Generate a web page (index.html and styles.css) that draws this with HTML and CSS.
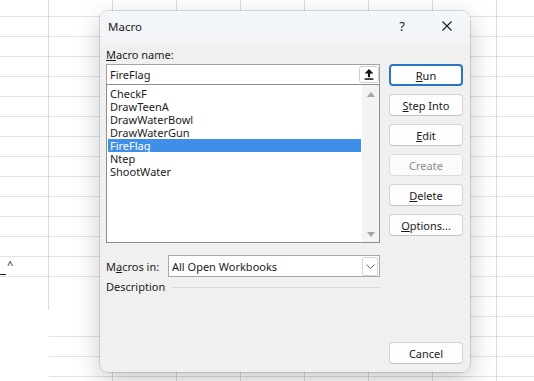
FILE: index.html
```html
<!DOCTYPE html>
<html lang="en">
<head>
    <meta charset="UTF-8">
    <meta name="viewport" content="width=device-width, initial-scale=1.0">
    <title>Macro</title>
    <link rel="stylesheet" href="styles.css">
</head>
<body>
    <div class="sheet">
        <div class="blank blank-a"></div>
        <div class="blank blank-b"></div>
        <div class="blank blank-c"></div>
        <div class="cell-note"><span class="uline"></span><span class="caret">^</span></div>

        <div class="dialog">
            <div class="titlebar">
                <span class="title">Macro</span>
                <span class="help">?</span>
                <span class="close">
                    <svg width="10" height="10" viewBox="0 0 10 10"><path d="M0.5 0.5 L9.5 9.5 M9.5 0.5 L0.5 9.5" stroke="#1b1b1b" stroke-width="1.1" fill="none"/></svg>
                </span>
            </div>

            <div class="content">
                <div class="main">
                    <label class="field-label"><u>M</u>acro name:</label>
                    <div class="name-input">
                        <span>FireFlag</span>
                        <button class="ref-btn">
                            <svg width="10" height="11" viewBox="0 0 10 11"><path d="M5 0 L9.5 4.6 H6.1 V8.3 H3.9 V4.6 H0.5 Z" fill="#111"/><rect x="0.6" y="9.3" width="8.8" height="1.5" fill="#111"/></svg>
                        </button>
                    </div>
                    <div class="listbox">
                        <ul class="items">
                            <li>CheckF</li>
                            <li>DrawTeenA</li>
                            <li>DrawWaterBowl</li>
                            <li>DrawWaterGun</li>
                            <li class="selected">FireFlag</li>
                            <li>Ntep</li>
                            <li>ShootWater</li>
                        </ul>
                        <div class="scrollbar">
                            <svg width="8" height="5" viewBox="0 0 8 5"><path d="M4 0 L8 5 H0 Z" fill="#a5a5a5"/></svg>
                            <svg width="8" height="5" viewBox="0 0 8 5"><path d="M0 0 H8 L4 5 Z" fill="#a5a5a5"/></svg>
                        </div>
                    </div>
                    <div class="macros-in">
                        <label class="row-label">M<u>a</u>cros in:</label>
                        <div class="select">
                            <span>All Open Workbooks</span>
                            <span class="drop">
                                <svg width="9" height="5" viewBox="0 0 9 5"><path d="M0.5 0.5 L4.5 4.5 L8.5 0.5" stroke="#666" stroke-width="1" fill="none"/></svg>
                            </span>
                        </div>
                    </div>
                    <div class="desc">
                        <span>Description</span>
                        <span class="rule"></span>
                    </div>
                </div>

                <div class="actions">
                    <button class="default"><u>R</u>un</button>
                    <button><u>S</u>tep Into</button>
                    <button><u>E</u>dit</button>
                    <button class="disabled">Create</button>
                    <button><u>D</u>elete</button>
                    <button><u>O</u>ptions...</button>
                    <button class="cancel">Cancel</button>
                </div>
            </div>
        </div>
    </div>
</body>
</html>
```

FILE: styles.css
```css
* {
    box-sizing: border-box;
}

body {
    margin: 0;
    width: 534px;
    height: 381px;
    overflow: hidden;
    font-family: "Noto Sans", sans-serif;
    font-size: 11px;
    color: #1b1b1b;
    background-color: #fff;
    background-image:
        linear-gradient(to right, #dadada 1px, transparent 1px),
        linear-gradient(to bottom, #e2e2e2 1px, transparent 1px);
    background-size: 64px 20px;
    background-position: 48px 0, 0 16px;
}

.sheet {
    position: relative;
    width: 534px;
    height: 381px;
}

/* empty cells at the lower left */
.blank {
    position: absolute;
    background: #fff;
}

.blank-a {
    left: 0;
    top: 282px;
    width: 48px;
    height: 28px;
}

.blank-b {
    left: 0;
    top: 310px;
    width: 49px;
    height: 71px;
}

.blank-c {
    left: 49px;
    top: 282px;
    width: 51px;
    height: 46px;
}

.cell-note {
    position: absolute;
    left: 0;
    top: 259px;
    display: flex;
    align-items: flex-start;
    height: 16px;
}

.uline {
    width: 6px;
    height: 1px;
    margin-top: 15px;
    background: #222;
}

.caret {
    margin-left: 1px;
    font-size: 11px;
    line-height: 11px;
}

/* dialog */
.dialog {
    position: absolute;
    left: 100px;
    top: 11px;
    width: 370px;
    height: 361px;
    display: flex;
    flex-direction: column;
    background: #f0f0f0;
    border-radius: 8px;
    box-shadow: 0 0 0 1px rgba(0, 0, 0, 0.12), 0 8px 26px rgba(0, 0, 0, 0.22);
}

.titlebar {
    height: 34px;
    padding: 0 0 4px 8px;
    display: flex;
    align-items: center;
    border-radius: 8px 8px 0 0;
    background: linear-gradient(to bottom, #f4f7fa, #f1f3f5);
}

.title {
    font-size: 11.5px;
}

.help {
    margin-left: auto;
    width: 22px;
    text-align: center;
    font-size: 13px;
}

.close {
    width: 46px;
    margin-left: 11px;
    display: flex;
    justify-content: center;
}

.content {
    flex: 1;
    display: flex;
    gap: 9px;
    padding: 0 7px 8px 6px;
}

.main {
    width: 274px;
    display: flex;
    flex-direction: column;
}

.field-label {
    height: 19px;
    line-height: 19px;
}

.name-input {
    height: 20px;
    padding-left: 3px;
    display: flex;
    align-items: center;
    justify-content: space-between;
    background: #fff;
    border: 1px solid #a3a3a3;
    border-bottom: none;
}

.ref-btn {
    width: 20px;
    height: 17px;
    padding: 0;
    display: flex;
    align-items: center;
    justify-content: center;
    background: #fff;
    border: 1px solid #cfcfcf;
    border-radius: 3px;
}

.listbox {
    height: 159px;
    display: flex;
    background: #fff;
    border: 1px solid #8e8e8e;
}

.items {
    flex: 1;
    margin: 0;
    padding: 2px 1px 0 1px;
    list-style: none;
}

.items li {
    height: 13px;
    line-height: 13px;
    padding-left: 2px;
}

.items li.selected {
    background: #3f8fe8;
    color: #fff;
}

.scrollbar {
    width: 17px;
    padding: 7px 0 5px;
    display: flex;
    flex-direction: column;
    align-items: center;
    justify-content: space-between;
    background: #f3f3f3;
}

.macros-in {
    margin-top: 12px;
    height: 22px;
    display: flex;
    align-items: center;
}

.row-label {
    width: 62px;
}

.select {
    flex: 1;
    height: 22px;
    padding-left: 3px;
    display: flex;
    align-items: center;
    justify-content: space-between;
    background: #fff;
    border: 1px solid #a8a8a8;
}

.drop {
    width: 16px;
    height: 19px;
    margin-right: 1px;
    display: flex;
    align-items: center;
    justify-content: center;
    border: 1px solid #d4d4d4;
    border-radius: 2px;
}

.desc {
    margin-top: 2px;
    height: 16px;
    line-height: 16px;
    display: flex;
    align-items: center;
}

.rule {
    flex: 1;
    margin-left: 6px;
    border-top: 1px solid #dadada;
}

.actions {
    width: 74px;
    padding-top: 19px;
    display: flex;
    flex-direction: column;
    gap: 8px;
}

.actions button {
    height: 22px;
    padding: 0;
    font-family: "Noto Sans", sans-serif;
    font-size: 11px;
    color: #1b1b1b;
    background: #fdfdfd;
    border: 1px solid #d3d3d3;
    border-bottom-color: #c4c4c4;
    border-radius: 4px;
}

.actions button.default {
    border: 2px solid #2a76c6;
}

.actions button.disabled {
    color: #8d8d8d;
    background: #fbfbfb;
    border-color: #dcdcdc;
}

.actions button.cancel {
    margin-top: auto;
}
```
